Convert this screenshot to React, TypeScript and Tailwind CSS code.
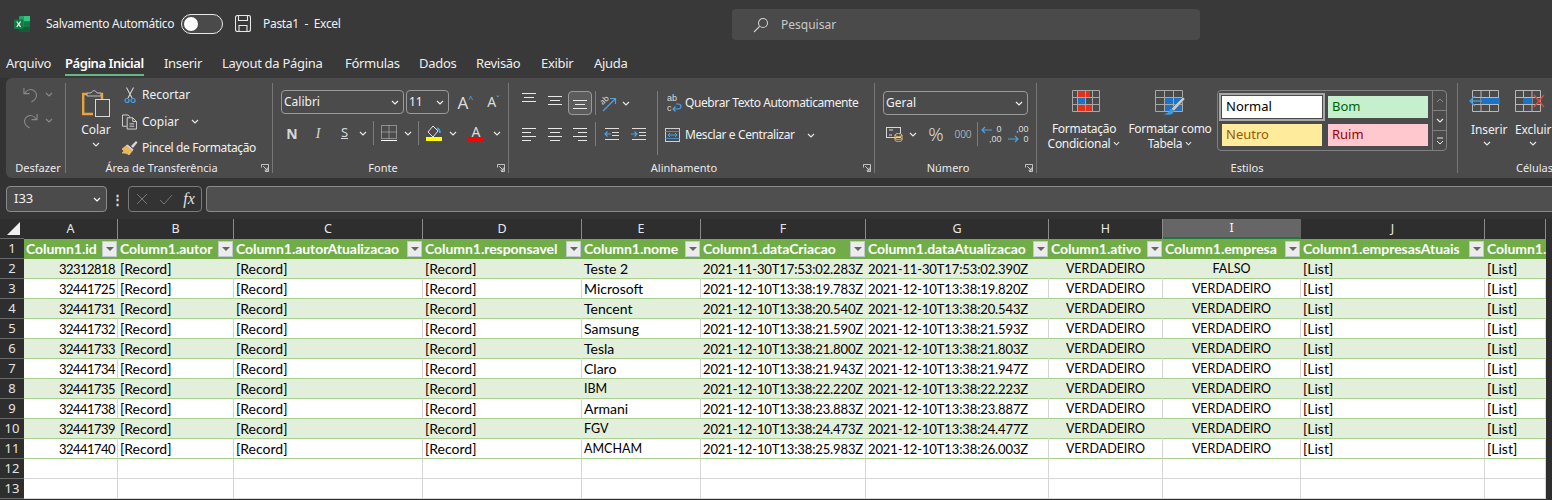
import React from "react";

const Chev = ({ c = "#e6e6e6", w = 8 }: { c?: string; w?: number }) => (
  <svg width={w} height="5" viewBox="0 0 8 5" fill="none"><path d="M1 1l3 3 3-3" stroke={c} strokeWidth="1.2" /></svg>
);

const Launcher = () => (
  <svg width="8" height="8" viewBox="0 0 9 9" fill="none" stroke="#d8d8d8">
    <path d="M.5 4V.5H8.5V8.5H4.5" /><path d="M2.5 2.5L7 7M7 4v3H4" />
  </svg>
);

const VSep = ({ h = 24, cls = "" }: { h?: number; cls?: string }) => (
  <div className={`w-px bg-[#7c7c7c] ${cls}`} style={{ height: h }} />
);

const Slot = ({ w, children, cls = "" }: { w: number; children: React.ReactNode; cls?: string }) => (
  <div className={`flex items-center justify-center shrink-0 ${cls}`} style={{ width: w }}>{children}</div>
);

const Group = ({ w, label, launcher, children, last, labelCls = "" }: { w: number; label: string; launcher?: boolean; children: React.ReactNode; last?: boolean; labelCls?: string }) => (
  <div className="flex shrink-0 h-full" style={{ width: w }}>
    <div className="flex flex-col flex-1 min-w-0 h-full pt-[3px] pb-[2px]">
      <div className="h-[79px] shrink-0">{children}</div>
      <div className="h-[16px] flex items-center shrink-0">
        <div className={`flex-1 text-center text-[11px] leading-[16px] text-[#eaeaea] ${labelCls}`}>{label}</div>
        {launcher && <div className="w-[15px] flex items-center justify-end pr-[3px]"><Launcher /></div>}
      </div>
    </div>
    {!last && <div className="w-px bg-[#767676] shrink-0 mt-[5px] mb-[5px]" />}
  </div>
);

const Select = ({ w, text, cls = "" }: { w: number; text: string; cls?: string }) => (
  <div className={`h-[24px] border border-[#9a9a9a] rounded-[4px] flex items-center justify-between pl-[2px] pr-[4px] text-[12px] text-[#f2f2f2] shrink-0 ${cls}`} style={{ width: w }}>
    <span>{text}</span>
    <Chev c="#f0f0f0" />
  </div>
);

const Lines = ({ rows }: { rows: [number, number][] }) => (
  <svg width="16" height="14" viewBox="0 0 16 14" stroke="#e8e8e8" fill="none">
    {rows.map(([a, b], i) => <path key={i} d={`M${a} ${i * 4 + 1.5}H${b}`} />)}
  </svg>
);

const ExcelLogo = () => (
  <svg width="16" height="16" viewBox="0 0 16 16">
    <rect x="5" y="0" width="11" height="16" rx="1" fill="#21a366" />
    <rect x="10" y="0" width="6" height="5.3" fill="#33c481" />
    <rect x="10" y="5.3" width="6" height="5.3" fill="#107c41" />
    <rect x="5" y="10.6" width="11" height="5.4" fill="#185c37" />
    <rect x="0" y="3.5" width="9.5" height="9.5" rx="1" fill="#107c41" />
    <path d="M2.8 5.5l3.8 5.4M6.6 5.5l-3.8 5.4" stroke="#fff" strokeWidth="1.2" />
  </svg>
);

const Save = () => (
  <svg width="16" height="17" viewBox="0 0 16 17" fill="none" stroke="#e8e8e8" strokeWidth="1.1">
    <path d="M.5 2.5a2 2 0 0 1 2-2h11a2 2 0 0 1 2 2v12a2 2 0 0 1-2 2h-11a2 2 0 0 1-2-2z" />
    <path d="M3.5.5v5h9v-5M4 16.5v-6h8v6" />
  </svg>
);

const Undo = ({ flip }: { flip?: boolean }) => (
  <svg width="15" height="17" viewBox="0 0 16 18" fill="none" stroke="#8a8a8a" strokeWidth="1.2" style={flip ? { transform: "scaleX(-1)" } : undefined}>
    <path d="M1 2v6h6" /><path d="M1.5 8C4 4 8 3 11 4.5c4 2 4.500 7 1.500 10L9 17" />
  </svg>
);

const Paste = () => (
  <svg width="28" height="27" viewBox="0 0 28 27" fill="none">
    <path d="M6 4H1.200v20H11" stroke="#e8a33c" strokeWidth="2.4" fill="none" />
    <path d="M17 4h3v5" stroke="#e8a33c" strokeWidth="2.4" />
    <path d="M5 6V3h4c1-3 5-3 6 0h4v3z" fill="#4b4b4b" stroke="#bdbdbd" strokeWidth="1" />
    <rect x="13.500" y="9.500" width="14" height="17" fill="#4b4b4b" stroke="#d8d8d8" />
  </svg>
);

const Scissors = () => (
  <svg width="12" height="17" viewBox="0 0 12 17" fill="none">
    <path d="M2.500 .5L8 11M9.500 .5L4 11" stroke="#d4d4d4" strokeWidth="1.1" />
    <circle cx="3" cy="13.500" r="2" stroke="#4aa3e8" strokeWidth="1.2" />
    <circle cx="9" cy="13.500" r="2" stroke="#4aa3e8" strokeWidth="1.2" />
  </svg>
);

const Copy = () => (
  <svg width="16" height="16" viewBox="0 0 16 16" fill="none" stroke="#d8d8d8">
    <path d="M5 12.500H.5V.5H6.500L8.500 2.500" />
    <path d="M5.500 3.500h6l4 4v8h-10z" /><path d="M11.500 3.500v4h4M8 10h5M8 12.500h5" />
  </svg>
);

const Brush = () => (
  <svg width="17" height="16" viewBox="0 0 17 16" fill="none">
    <path d="M1 9l5-4 6 5-4 5C6 13 3 13 1 13c2-1 2-2 0-4z" fill="#eab65a" stroke="#f3d28e" strokeWidth=".6" />
    <path d="M6 5l6 5" stroke="#d8d8d8" strokeWidth="1.6" />
    <path d="M10 6l5-5 1.500 1.500L12 8" fill="#d8d8d8" />
  </svg>
);

const Borders = () => (
  <svg width="16" height="16" viewBox="0 0 16 16" fill="none" stroke="#d0d0d0" strokeDasharray="1 1">
    <path d="M.5 .5h15v13h-15zM8 .5v13M.5 7h15" />
    <path d="M0 15.500h16" stroke="#fff" strokeDasharray="none" />
  </svg>
);

const Fill = () => (
  <svg width="16" height="16" viewBox="0 0 16 16" fill="none">
    <path d="M7 1l5 5-5 6-5-5z" stroke="#e4e4e4" />
    <path d="M11 3c2 1 3 3 3 5" stroke="#4aa3e8" strokeWidth="1.6" />
    <rect x="0" y="12" width="16" height="4" fill="#ffff00" />
  </svg>
);

const Orientation = () => (
  <div className="relative w-[18px] h-[17px]">
    <span className="absolute left-[0px] top-[0px] text-[8px] leading-[9px] text-[#dcdcdc] -rotate-45">ab</span>
    <svg className="absolute left-0 top-0" width="18" height="17" viewBox="0 0 18 17" fill="none">
      <path d="M4 16L16 4M11 3.500h5.500V9" stroke="#4aa3e8" strokeWidth="1.2" />
    </svg>
  </div>
);

const Indent = ({ rev }: { rev?: boolean }) => (
  <svg width="15" height="12" viewBox="0 0 15 12" fill="none">
    <path d="M1 .5h14M8 4.500h7M8 7.500h7M1 11.500h14" stroke="#dcdcdc" />
    {rev ? <path d="M0 6h6M3.500 3.500L6 6 3.500 8.500" stroke="#4aa3e8" strokeWidth="1.1" /> : <path d="M1 6h6M3.500 3.500L1 6l2.500 2.500" stroke="#4aa3e8" strokeWidth="1.1" />}
  </svg>
);

const WrapIcon = () => (
  <div className="relative w-[15px] h-[21px]">
    <div className="text-[9px] leading-[10.5px] text-[#dcdcdc] font-['Liberation_Sans',sans-serif]"><div>ab</div><div>c</div></div>
    <svg className="absolute left-0 top-0" width="15" height="21" viewBox="0 0 15 21" fill="none">
      <path d="M6 16h5c4 0 4-5 0-5H9M8.500 13.500L6 16l2.500 2.500" stroke="#4aa3e8" strokeWidth="1.1" />
    </svg>
  </div>
);

const MergeIcon = () => (
  <svg width="15" height="14" viewBox="0 0 15 14" fill="none">
    <rect x=".5" y=".5" width="14" height="13" stroke="#cfcfcf" />
    <path d="M.5 3.500h14M.5 10.500h14" stroke="#3f8ccb" />
    <path d="M3 7h9M5 5L3 7l2 2M10 5l2 2-2 2" stroke="#4aa3e8" />
  </svg>
);

const Accounting = () => (
  <svg width="17" height="15" viewBox="0 0 17 15" fill="none">
    <rect x=".5" y=".5" width="14" height="10" stroke="#d8d8d8" />
    <path d="M3 3h4M3 8h3" stroke="#d8d8d8" />
    <ellipse cx="12.500" cy="8" rx="3.500" ry="1.500" fill="#4b4b4b" stroke="#e8b65a" />
    <path d="M9 8v5c0 2 7 2 7 0V8M9 11c0 2 7 2 7 0" stroke="#e8b65a" />
  </svg>
);

const CondFmt = () => (
  <svg width="29" height="23" viewBox="0 0 29 23" fill="none">
    <rect x="5" y="0" width="13" height="7" fill="#e0301e" />
    <rect x="5" y="8" width="8" height="6" fill="#1c72c4" />
    <rect x="5" y="15" width="15" height="7" fill="#e0301e" />
    <path d="M.5 .5h27v21H.5zM.5 7.500h27M.5 14.500h27M5.500 .5v21M13.500 .5v21M20.500 .5v21" stroke="#a8a8a8" />
  </svg>
);

const TableFmt = () => (
  <svg width="32" height="27" viewBox="0 0 32 27" fill="none">
    <rect x="10" y="8" width="18" height="14" fill="#1c72c4" />
    <path d="M.5 .5h27v21H.5zM.5 7.500h27M.5 14.500h27M9.500 .5v21M18.500 .5v21" stroke="#a8a8a8" />
    <path d="M16 19L28 7l2 2-11 12z" fill="#c8c8c8" stroke="#4b4b4b" strokeWidth=".5" />
    <path d="M15 19c-1 4-4 5-7 5 3 1 10 2 11-3z" fill="#3f9be0" />
  </svg>
);

const InsertCells = () => (
  <svg width="33" height="22" viewBox="0 0 33 22" fill="none">
    <path d="M3.500 .5h26v21h-26zM3.500 7.500h26M3.500 14.500h26M12 .5v21M20.500 .5v21" stroke="#b8b8b8" />
    <rect x="12" y="8" width="19" height="6" fill="#1c72c4" />
    <path d="M1 11h12M6 6l-5 5 5 5" stroke="#3f9be0" strokeWidth="1.400" />
  </svg>
);

const DeleteCells = () => (
  <svg width="30" height="22" viewBox="0 0 30 22" fill="none">
    <path d="M.5 .5h25v21H.5zM.5 7.500h25M.5 14.500h25M8.500 .5v21M17 .5v21" stroke="#b8b8b8" />
    <rect x="8" y="8" width="9" height="6" fill="#1c72c4" />
    <path d="M19 5l10 12M29 5L19 17" stroke="#e0483a" strokeWidth="1.400" />
  </svg>
);

const Search = () => (
  <svg width="16" height="16" viewBox="0 0 16 16" fill="none" stroke="#d0d0d0" strokeWidth="1.1">
    <circle cx="10" cy="6" r="4.500" /><path d="M6.500 9.500L1 15" />
  </svg>
);

const DecIcon = ({ more }: { more?: boolean }) => (
  <div className="relative w-[21px] h-[21px] text-[9px] leading-[10.5px] text-[#dcdcdc] font-['Liberation_Sans',sans-serif]">
    <div className="text-right">{more ? ",00" : "0"}</div>
    <div className="text-right">{more ? "0" : ",00"}</div>
    <svg className="absolute top-0 left-0" width="12" height="21" viewBox="0 0 12 21" fill="none" stroke="#4aa3e8" strokeWidth="1.2">
      {more ? <path d="M0 15h10M7 12l3 3-3 3" /> : <path d="M1 6h10M4 3L1 6l3 3" />}
    </svg>
  </div>
);

const tabs: [string, number][] = [["Arquivo", 59], ["Página Inicial", 99], ["Inserir", 58], ["Layout da Página", 123], ["Fórmulas", 74], ["Dados", 57], ["Revisão", 65], ["Exibir", 53], ["Ajuda", 60]];

const cols = ["A", "B", "C", "D", "E", "F", "G", "H", "I", "J", ""];
const headers = ["Column1.id", "Column1.autor", "Column1.autorAtualizacao", "Column1.responsavel", "Column1.nome", "Column1.dataCriacao", "Column1.dataAtualizacao", "Column1.ativo", "Column1.empresa", "Column1.empresasAtuais", "Column1."];
const rows: [string, string, string, string, string][] = [
  ["32312818", "Teste 2", "2021-11-30T17:53:02.283Z", "2021-11-30T17:53:02.390Z", "FALSO"],
  ["32441725", "Microsoft", "2021-12-10T13:38:19.783Z", "2021-12-10T13:38:19.820Z", "VERDADEIRO"],
  ["32441731", "Tencent", "2021-12-10T13:38:20.540Z", "2021-12-10T13:38:20.543Z", "VERDADEIRO"],
  ["32441732", "Samsung", "2021-12-10T13:38:21.590Z", "2021-12-10T13:38:21.593Z", "VERDADEIRO"],
  ["32441733", "Tesla", "2021-12-10T13:38:21.800Z", "2021-12-10T13:38:21.803Z", "VERDADEIRO"],
  ["32441734", "Claro", "2021-12-10T13:38:21.943Z", "2021-12-10T13:38:21.947Z", "VERDADEIRO"],
  ["32441735", "IBM", "2021-12-10T13:38:22.220Z", "2021-12-10T13:38:22.223Z", "VERDADEIRO"],
  ["32441738", "Armani", "2021-12-10T13:38:23.883Z", "2021-12-10T13:38:23.887Z", "VERDADEIRO"],
  ["32441739", "FGV", "2021-12-10T13:38:24.473Z", "2021-12-10T13:38:24.477Z", "VERDADEIRO"],
  ["32441740", "AMCHAM", "2021-12-10T13:38:25.983Z", "2021-12-10T13:38:26.003Z", "VERDADEIRO"],
];

const RowHead = ({ n }: { n: number }) => (
  <div className="bg-[#2e2e2e] border-b border-[#6a6a6a] text-[#e4e4e4] flex items-center justify-center text-[13px] h-[20px] font-['Noto_Sans',sans-serif]">{n}</div>
);

const Cell = ({ text, band, align = "left", kind = "" }: { text?: string; band: boolean | null; align?: "left" | "right" | "center"; kind?: string }) => {
  const bg = band === null ? "bg-white border-b border-r border-[#d6d6d6]" : band ? "bg-[#e2efda] border-b border-r border-b-[#a9d08e] border-r-[#e2efda]" : "bg-white border-b border-r border-b-[#a9d08e] border-r-[#d6d6d6]";
  const al = align === "right" ? "justify-end pr-[2px]" : align === "center" ? "justify-center" : "justify-start pl-[2px]";
  return <div className={`h-[20px] flex items-center overflow-hidden whitespace-nowrap text-black ${bg} ${al} ${kind}`}>{text}</div>;
};

export default function App() {
  return (
    <div className="w-[1552px] h-[500px] overflow-hidden bg-[#333333] font-['Noto_Sans',sans-serif] text-[#f0f0f0] flex flex-col">
      {/* Title bar */}
      <div className="h-[47px] shrink-0 bg-[#393939] flex items-center">
        <div className="ml-[14px] mr-[16px] flex"><ExcelLogo /></div>
        <span className="text-[12px] w-[135px] whitespace-nowrap tracking-[-0.3px]">Salvamento Automático</span>
        <div className="w-[42px] h-[20px] rounded-full border border-[#e8e8e8] bg-[#4a4a4a] flex items-center pl-[2px]">
          <div className="w-[14px] h-[14px] rounded-full bg-white" />
        </div>
        <div className="ml-[12px] flex"><Save /></div>
        <span className="ml-[12px] w-[90px] text-[12px] tracking-[-0.3px] whitespace-pre">Pasta1  -  Excel</span>
        <div className="ml-[379px] w-[468px] h-[31px] self-start mt-[9px] rounded-[4px] bg-[#4a4a4a] flex items-center pl-[21px] gap-[12px]">
          <Search />
          <span className="text-[12px] text-[#c8c8c8]">Pesquisar</span>
        </div>
      </div>

      {/* Tabs */}
      <div className="h-[31px] shrink-0 bg-[#393939] flex pl-[6px] text-[13px] text-[#eeeeee]">
        {tabs.map(([t, w], i) => (
          <div key={t} className="h-full shrink-0 pt-[6px]" style={{ width: w }}>
            <div className={`inline-block leading-[20px] whitespace-nowrap ${i === 1 ? "font-semibold tracking-[-0.45px] border-b-2 border-[#64b883] pb-[1px] text-white" : "tracking-[-0.3px]"}`}>{t}</div>
          </div>
        ))}
      </div>

      {/* Ribbon */}
      <div className="h-[100px] shrink-0 ml-[6px] bg-[#4b4b4b] rounded-l-[6px] flex overflow-hidden text-[12px] text-[#f0f0f0]">
        <Group w={60} label="Desfazer" labelCls="pl-[5px]">
          <div className="flex flex-col pl-[17px] pt-[5px] gap-[9px]">
            <div className="flex items-center gap-[7px]"><Undo /><Chev c="#8a8a8a" /></div>
            <div className="flex items-center gap-[7px]"><Undo flip /><Chev c="#8a8a8a" /></div>
          </div>
        </Group>
        <Group w={207} label="Área de Transferência" launcher>
          <div className="flex h-full">
            <div className="w-[54px] ml-[3px] flex flex-col items-center pt-[9px]">
              <div className="flex h-[27px] shrink-0"><Paste /></div>
              <span className="mt-[5px] leading-[16px]">Colar</span>
              <div className="mt-[4px] flex"><Chev /></div>
            </div>
            <div className="flex flex-col pt-[1px]">
              <div className="h-[26px] shrink-0 flex items-center"><Slot w={15} cls="ml-[-1px]"><Scissors /></Slot><span className="ml-[5px]">Recortar</span></div>
              <div className="h-[27px] shrink-0 flex items-center"><Slot w={15} cls="ml-[-1px]"><Copy /></Slot><span className="ml-[5px]">Copiar</span><span className="ml-[12px] flex"><Chev /></span></div>
              <div className="h-[26px] shrink-0 flex items-center whitespace-nowrap"><Slot w={17} cls="ml-[-2px]"><Brush /></Slot><span className="ml-[4px] tracking-[-0.35px]">Pincel de Formatação</span></div>
            </div>
          </div>
        </Group>
        <Group w={236} label="Fonte" launcher>
          <div className="pl-[8px] pt-[9px]">
            <div className="flex items-center gap-[2px]">
              <Select w={123} text="Calibri" />
              <Select w={43} text="11" />
              <Slot w={27} cls="ml-[1px]"><span className="text-[17px] leading-none text-[#dcdcdc]">A<span className="text-[9px] align-top text-[#5aa9e6]">^</span></span></Slot>
              <Slot w={25}><span className="text-[14px] leading-none text-[#dcdcdc]">A<span className="text-[9px] align-top text-[#5aa9e6]">ˇ</span></span></Slot>
            </div>
            <div className="flex items-center h-[24px] mt-[7px]">
              <Slot w={22}><span className="text-[14px] font-bold text-[#d8d8d8]">N</span></Slot>
              <Slot w={30}><span className="text-[14px] italic font-['Liberation_Serif',serif] text-[#d8d8d8]">I</span></Slot>
              <Slot w={23}><span className="text-[13px] underline text-[#d8d8d8]">S</span></Slot>
              <Slot w={14}><Chev /></Slot>
              <Slot w={7}><VSep /></Slot>
              <Slot w={24}><Borders /></Slot>
              <Slot w={14}><Chev /></Slot>
              <Slot w={7}><VSep /></Slot>
              <Slot w={24}><Fill /></Slot>
              <Slot w={14}><Chev /></Slot>
              <Slot w={32}><div className="flex flex-col items-center leading-none"><span className="text-[14px] leading-[13px] text-[#dcdcdc]">A</span><div className="w-[16px] h-[4px] bg-[#ff0000]" /></div></Slot>
              <Slot w={10}><Chev /></Slot>
            </div>
          </div>
        </Group>
        <Group w={366} label="Alinhamento" launcher>
          <div className="flex h-full pt-[10px]">
            <div className="flex flex-col ml-[7px]">
              <div className="flex items-center h-[24px]">
                <Slot w={26}><div className="flex -translate-y-[4px]"><Lines rows={[[1, 15], [3, 13], [1, 15]]} /></div></Slot>
                <Slot w={26}><div className="flex -translate-y-[1px]"><Lines rows={[[1, 15], [3, 13], [1, 15]]} /></div></Slot>
                <Slot w={24} cls="h-[24px] border border-[#9a9a9a] rounded-[4px] bg-[#5c5c5c]"><div className="flex translate-y-[3px]"><Lines rows={[[1, 15], [3, 13], [1, 15]]} /></div></Slot>
                <Slot w={3} cls="ml-[2px]"><VSep /></Slot>
                <Slot w={26} cls="ml-[-2px]"><Orientation /></Slot>
                <Slot w={10}><Chev /></Slot>
              </div>
              <div className="flex items-center h-[24px] mt-[7px]">
                <Slot w={26}><Lines rows={[[1, 15], [1, 10], [1, 15], [1, 10]]} /></Slot>
                <Slot w={26}><Lines rows={[[1, 15], [3, 13], [1, 15], [3, 13]]} /></Slot>
                <Slot w={24}><Lines rows={[[1, 15], [6, 15], [1, 15], [6, 15]]} /></Slot>
                <Slot w={3} cls="ml-[2px]"><VSep /></Slot>
                <Slot w={28}><Indent /></Slot>
                <Slot w={27}><Indent rev /></Slot>
              </div>
            </div>
            <div className="ml-[5px] w-px h-[64px] bg-[#7c7c7c]" />
            <div className="flex flex-col ml-[7px] whitespace-nowrap">
              <div className="h-[24px] flex items-center gap-[3px] pl-[2px]"><WrapIcon /><span className="tracking-[-0.4px]">Quebrar Texto Automaticamente</span></div>
              <div className="h-[24px] mt-[8px] flex items-center gap-[5px]"><MergeIcon /><span className="tracking-[-0.4px]">Mesclar e Centralizar</span><span className="ml-[7px] flex"><Chev /></span></div>
            </div>
          </div>
        </Group>
        <Group w={162} label="Número" launcher>
          <div className="pl-[8px] pt-[10px]">
            <Select w={145} text="Geral" />
            <div className="flex items-center h-[24px] mt-[7px]">
              <Slot w={22}><Accounting /></Slot>
              <Slot w={16}><Chev /></Slot>
              <Slot w={30}><span className="text-[19px] leading-none font-light text-[#d8d8d8]">%</span></Slot>
              <Slot w={24}><span className="text-[10px] font-light text-[#d0d0d0]">000</span></Slot>
              <Slot w={4}><VSep /></Slot>
              <Slot w={24}><DecIcon /></Slot>
              <Slot w={30}><DecIcon more /></Slot>
            </div>
          </div>
        </Group>
        <Group w={421} label="Estilos">
          <div className="flex h-full pt-[9px]">
            <div className="w-[72px] ml-[11px] flex flex-col items-center shrink-0">
              <div className="ml-[4px] h-[24px] shrink-0 flex"><CondFmt /></div>
              <div className="mt-[7px] text-center leading-[15px] whitespace-nowrap tracking-[-0.3px]">Formatação<div className="flex items-center justify-center gap-[3px]">Condicional <Chev w={7} /></div></div>
            </div>
            <div className="w-[97px] pl-[3px] flex flex-col items-center shrink-0">
              <div className="flex h-[27px] shrink-0 ml-[2px]"><TableFmt /></div>
              <div className="mt-[4px] text-center leading-[15px] whitespace-nowrap tracking-[-0.3px]">Formatar como<div className="flex items-center justify-center gap-[3px]">Tabela <Chev w={7} /></div></div>
            </div>
            <div className="w-[230px] h-[61px] border border-[#808080] rounded-[4px] flex shrink-0 text-[13px]">
              <div className="flex-1 grid grid-cols-[100px_100px] grid-rows-[22px_22px] gap-x-[6px] gap-y-[6px] pl-[4px] pt-[5px]">
                <div className="bg-white text-black flex items-center pl-[4px] outline-2 outline-offset-1 outline-[#a8a8a8]">Normal</div>
                <div className="bg-[#c6efce] text-[#006100] flex items-center pl-[4px]">Bom</div>
                <div className="bg-[#ffeb9c] text-[#9c5700] flex items-center pl-[4px]">Neutro</div>
                <div className="bg-[#ffc7ce] text-[#9c0006] flex items-center pl-[4px]">Ruim</div>
              </div>
              <div className="w-[14px] flex flex-col border-l border-[#808080]">
                <div className="flex-1 flex items-center justify-center border-b border-[#808080]"><svg width="8" height="5" viewBox="0 0 8 5" fill="none"><path d="M1 4l3-3 3 3" stroke="#8a8a8a" /></svg></div>
                <div className="flex-1 flex items-center justify-center border-b border-[#808080]"><Chev /></div>
                <div className="flex-1 flex items-center justify-center"><svg width="8" height="8" viewBox="0 0 8 8" fill="none"><path d="M1 1h6M1 4l3 3 3-3" stroke="#e6e6e6" /></svg></div>
              </div>
            </div>
          </div>
        </Group>
        <Group w={153} label="Células" last>
          <div className="flex h-full pt-[9px] pl-[11px]">
            <div className="w-[46px] flex flex-col shrink-0 items-start">
              <div className="flex h-[22px] shrink-0"><InsertCells /></div>
              <span className="mt-[10px] leading-[16px] pl-[2px] tracking-[-0.1px]">Inserir</span>
              <div className="mt-[3px] pl-[14px] flex"><Chev /></div>
            </div>
            <div className="w-[46px] flex flex-col shrink-0 items-start">
              <div className="flex h-[22px] shrink-0"><DeleteCells /></div>
              <span className="mt-[10px] leading-[16px] tracking-[-0.1px]">Excluir</span>
              <div className="mt-[3px] pl-[14px] flex"><Chev /></div>
            </div>
          </div>
        </Group>
      </div>

      {/* Formula bar */}
      <div className="h-[41px] shrink-0 bg-[#333333] flex items-start pl-[6px] pt-[8px] text-[13px]">
        <div className="w-[101px] h-[26px] border border-[#8a8a8a] rounded-[4px] bg-[#4b4b4b] flex items-center justify-between pl-[7px] pr-[4px] shrink-0">
          <span>I33</span><Chev c="#fff" w={10} />
        </div>
        <div className="w-[21px] h-[26px] flex items-center justify-center font-bold leading-none text-[#e0e0e0] shrink-0">⋮</div>
        <div className="w-[74px] h-[26px] border border-[#7a7a7a] rounded-[4px] flex items-center shrink-0">
          <Slot w={25}><svg width="12" height="12" viewBox="0 0 12 12" stroke="#777" fill="none"><path d="M1 1l10 10M11 1L1 11" /></svg></Slot>
          <Slot w={24}><svg width="14" height="11" viewBox="0 0 14 11" stroke="#777" fill="none"><path d="M1 6l4 4 8-9" /></svg></Slot>
          <Slot w={22}><span className="font-['Liberation_Serif',serif] italic text-[16px] text-[#e0e0e0]">fx</span></Slot>
        </div>
        <div className="ml-[4px] flex-1 h-[26px] border border-[#8a8a8a] border-r-0 rounded-l-[4px] bg-[#4f4f4f]" />
      </div>

      {/* Sheet */}
      <div className="flex-1 grid grid-cols-[24px_94px_116px_189px_159px_119px_165px_183px_114px_138px_184px_61px_6px] auto-rows-[20px] content-start bg-[#2e2e2e] font-['Lato',sans-serif] text-[14px]">
        <div className="bg-[#2e2e2e] flex items-end justify-end pr-[4px] pb-[3px] border-b border-[#6a6a6a]">
          <svg width="13" height="13" viewBox="0 0 13 13"><path d="M13 0v13H0z" fill="#f0f0f0" /></svg>
        </div>
        {cols.map((c, i) => (
          <div key={i} className={`h-[20px] flex items-center justify-center border-r font-['Noto_Sans',sans-serif] text-[12.5px] ${c === "I" ? "bg-[#666666] border-[#666666] border-b-2 border-b-[#217346] text-[#f4f4f4]" : "bg-[#2e2e2e] border-[#8a8a8a] text-[#e8e8e8]"}`}>{c}</div>
        ))}
        <div />

        <RowHead n={1} />
        {headers.map((h, i) => (
          <div key={h} className="h-[20px] bg-[#70ad47] border-b border-[#70ad47] flex items-center justify-between overflow-hidden whitespace-nowrap font-bold text-white pl-[2px] tracking-[-0.05px]">
            <span>{h}</span>
            {i < 10 && (
              <div className="w-[15px] h-[16px] mr-[1px] bg-[#ececec] border border-[#c0c8d0] flex items-center justify-center shrink-0">
                <svg width="8" height="4" viewBox="0 0 8 4"><path d="M0 0h8L4 4z" fill="#666" /></svg>
              </div>
            )}
          </div>
        ))}
        <div />

        {rows.map((r, idx) => {
          const band = idx % 2 === 0;
          return (
            <React.Fragment key={r[0]}>
              <RowHead n={idx + 2} />
              <Cell text={r[0]} band={band} align="right" kind="text-[13px] tracking-[-0.55px] pt-[2px]" />
              <Cell text="[Record]" band={band} />
              <Cell text="[Record]" band={band} />
              <Cell text="[Record]" band={band} />
              <Cell text={r[1]} band={band} kind={r[1] === "AMCHAM" || r[1] === "IBM" || r[1] === "FGV" ? "text-[12.5px] pt-[2px]" : ""} />
              <Cell text={r[2]} band={band} kind="text-[13px] tracking-[-0.12px] pt-[2px]" />
              <Cell text={r[3]} band={band} kind="text-[13px] tracking-[-0.12px] pt-[2px]" />
              <Cell text="VERDADEIRO" band={band} align="center" kind="text-[12.5px] pt-[2px]" />
              <Cell text={r[4]} band={band} align="center" kind="text-[12.5px] pt-[2px]" />
              <Cell text="[List]" band={band} />
              <Cell text="[List]" band={band} />
              <div />
            </React.Fragment>
          );
        })}
        {[12, 13].map((n) => (
          <React.Fragment key={n}>
            <RowHead n={n} />
            {cols.map((_, i) => <Cell key={i} band={null} />)}
            <div />
          </React.Fragment>
        ))}
      </div>
    </div>
  );
}
